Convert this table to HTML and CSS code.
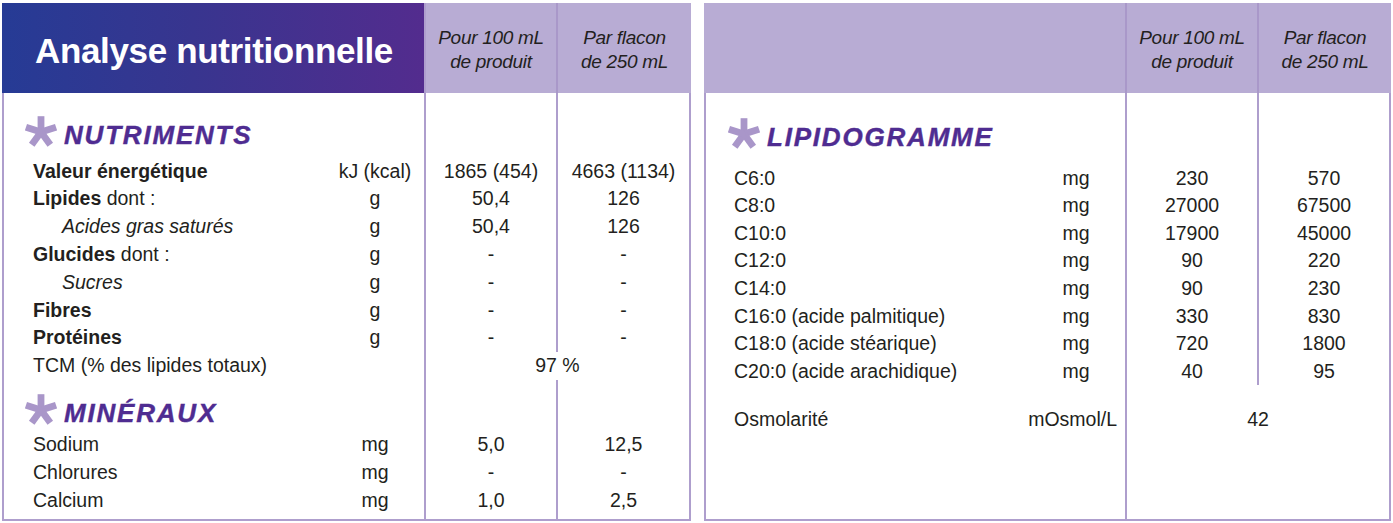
FILE: index.html
```html
<!DOCTYPE html>
<html lang="fr">
<head>
<meta charset="utf-8">
<title>Analyse nutritionnelle</title>
<link rel="stylesheet" href="styles.css">
</head>
<body>
<div class="page">
  <section class="panel left">
    <div class="head">
      <div class="title">Analyse nutritionnelle</div>
      <div class="hc">Pour 100 mL<br>de produit</div>
      <div class="hc">Par flacon<br>de 250 mL</div>
    </div>
    <div class="body">
      <div class="row sec s1">
        <div class="lc"><h2><svg class="star" viewBox="-16 -16 32 32" width="32" height="32" aria-hidden="true"><g stroke="#a996c9" stroke-width="6.8"><line x1="0" y1="0" x2="0" y2="-15.8"/><line x1="0" y1="0" x2="0" y2="-15.8" transform="rotate(72)"/><line x1="0" y1="0" x2="0" y2="-15.8" transform="rotate(144)"/><line x1="0" y1="0" x2="0" y2="-15.8" transform="rotate(216)"/><line x1="0" y1="0" x2="0" y2="-15.8" transform="rotate(288)"/></g></svg><span>NUTRIMENTS</span></h2></div>
        <div class="vc"></div><div class="vc"></div>
      </div>
      <div class="row"><div class="lc"><span class="lbl"><b>Valeur énergétique</b></span><span class="unit">kJ (kcal)</span></div><div class="vc">1865 (454)</div><div class="vc">4663 (1134)</div></div>
      <div class="row"><div class="lc"><span class="lbl"><b>Lipides</b> dont :</span><span class="unit">g</span></div><div class="vc">50,4</div><div class="vc">126</div></div>
      <div class="row"><div class="lc"><span class="lbl sub">Acides gras saturés</span><span class="unit">g</span></div><div class="vc">50,4</div><div class="vc">126</div></div>
      <div class="row"><div class="lc"><span class="lbl"><b>Glucides</b> dont :</span><span class="unit">g</span></div><div class="vc">-</div><div class="vc">-</div></div>
      <div class="row"><div class="lc"><span class="lbl sub">Sucres</span><span class="unit">g</span></div><div class="vc">-</div><div class="vc">-</div></div>
      <div class="row"><div class="lc"><span class="lbl"><b>Fibres</b></span><span class="unit">g</span></div><div class="vc">-</div><div class="vc">-</div></div>
      <div class="row"><div class="lc"><span class="lbl"><b>Protéines</b></span><span class="unit">g</span></div><div class="vc">-</div><div class="vc">-</div></div>
      <div class="row"><div class="lc"><span class="lbl">TCM (% des lipides totaux)</span></div><div class="vc span2">97 %</div></div>
      <div class="row sec s2">
        <div class="lc"><h2><svg class="star" viewBox="-16 -16 32 32" width="32" height="32" aria-hidden="true"><g stroke="#a996c9" stroke-width="6.8"><line x1="0" y1="0" x2="0" y2="-15.8"/><line x1="0" y1="0" x2="0" y2="-15.8" transform="rotate(72)"/><line x1="0" y1="0" x2="0" y2="-15.8" transform="rotate(144)"/><line x1="0" y1="0" x2="0" y2="-15.8" transform="rotate(216)"/><line x1="0" y1="0" x2="0" y2="-15.8" transform="rotate(288)"/></g></svg><span>MINÉRAUX</span></h2></div>
        <div class="vc"></div><div class="vc"></div>
      </div>
      <div class="row r28"><div class="lc"><span class="lbl">Sodium</span><span class="unit">mg</span></div><div class="vc">5,0</div><div class="vc">12,5</div></div>
      <div class="row r28"><div class="lc"><span class="lbl">Chlorures</span><span class="unit">mg</span></div><div class="vc">-</div><div class="vc">-</div></div>
      <div class="row r28"><div class="lc"><span class="lbl">Calcium</span><span class="unit">mg</span></div><div class="vc">1,0</div><div class="vc">2,5</div></div>
      <div class="row fill"><div class="lc"></div><div class="vc"></div><div class="vc"></div></div>
    </div>
  </section>

  <section class="panel right">
    <div class="head">
      <div class="blank"></div>
      <div class="hc">Pour 100 mL<br>de produit</div>
      <div class="hc">Par flacon<br>de 250 mL</div>
    </div>
    <div class="body">
      <div class="row sec s3">
        <div class="lc"><h2><svg class="star" viewBox="-16 -16 32 32" width="32" height="32" aria-hidden="true"><g stroke="#a996c9" stroke-width="6.8"><line x1="0" y1="0" x2="0" y2="-15.8"/><line x1="0" y1="0" x2="0" y2="-15.8" transform="rotate(72)"/><line x1="0" y1="0" x2="0" y2="-15.8" transform="rotate(144)"/><line x1="0" y1="0" x2="0" y2="-15.8" transform="rotate(216)"/><line x1="0" y1="0" x2="0" y2="-15.8" transform="rotate(288)"/></g></svg><span>LIPIDOGRAMME</span></h2></div>
        <div class="vc"></div><div class="vc"></div>
      </div>
      <div class="row"><div class="lc"><span class="lbl">C6:0</span><span class="unit">mg</span></div><div class="vc">230</div><div class="vc">570</div></div>
      <div class="row"><div class="lc"><span class="lbl">C8:0</span><span class="unit">mg</span></div><div class="vc">27000</div><div class="vc">67500</div></div>
      <div class="row"><div class="lc"><span class="lbl">C10:0</span><span class="unit">mg</span></div><div class="vc">17900</div><div class="vc">45000</div></div>
      <div class="row"><div class="lc"><span class="lbl">C12:0</span><span class="unit">mg</span></div><div class="vc">90</div><div class="vc">220</div></div>
      <div class="row"><div class="lc"><span class="lbl">C14:0</span><span class="unit">mg</span></div><div class="vc">90</div><div class="vc">230</div></div>
      <div class="row"><div class="lc"><span class="lbl">C16:0 (acide palmitique)</span><span class="unit">mg</span></div><div class="vc">330</div><div class="vc">830</div></div>
      <div class="row"><div class="lc"><span class="lbl">C18:0 (acide stéarique)</span><span class="unit">mg</span></div><div class="vc">720</div><div class="vc">1800</div></div>
      <div class="row"><div class="lc"><span class="lbl">C20:0 (acide arachidique)</span><span class="unit">mg</span></div><div class="vc">40</div><div class="vc">95</div></div>
      <div class="row osmo"><div class="lc"><span class="lbl">Osmolarité</span><span class="unit wide">mOsmol/L</span></div><div class="vc span2">42</div></div>
      <div class="row fill"><div class="lc"></div><div class="vc span2"></div></div>
    </div>
  </section>
</div>
</body>
</html>
```

FILE: styles.css
```css
* { box-sizing: border-box; }

:root {
  --line: #ae9ecd;
  --lilac: #b8acd4;
  --ink: #231f20;
  --purple: #4f2c91;
}

body {
  margin: 0;
  background: #ffffff;
  font-family: "Liberation Sans", Arial, Helvetica, sans-serif;
  color: var(--ink);
}

.page {
  display: flex;
  gap: 13px;
  padding: 3px 0 0 2px;
}

.panel {
  display: flex;
  flex-direction: column;
  height: 518px;
}

.left {
  width: 689px;
  --head-cols: 422px 132px 135px;
  --cols: 420px 132px 133px;
  --pad: 29px;
  --lh: 27.8px;
}

.right {
  width: 687px;
  --head-cols: 421px 132px 134px;
  --cols: 419px 132px 132px;
  --pad: 28px;
  --lh: 27.6px;
}

/* header */
.head {
  display: grid;
  grid-template-columns: var(--head-cols);
  height: 90px;
  background: var(--lilac);
  flex: none;
}

.title {
  display: flex;
  align-items: center;
  padding: 5px 0 0 33px;
  background: linear-gradient(90deg, #263b95 0%, #38358f 45%, #532c8e 100%);
  color: #ffffff;
  font-weight: bold;
  font-size: 35px;
  letter-spacing: -0.35px;
  white-space: nowrap;
}

.hc {
  border-left: 2px solid #a998c9;
  display: flex;
  align-items: center;
  justify-content: center;
  padding-top: 3px;
  text-align: center;
  font-style: italic;
  font-size: 19px;
  line-height: 24px;
  letter-spacing: -0.3px;
  color: var(--ink);
}

.left .head .hc:nth-child(2) { border-left-color: var(--line); }

/* body */
.body {
  flex: 1;
  display: flex;
  flex-direction: column;
  border: 2px solid var(--line);
  border-top: 0;
}

.row {
  display: grid;
  grid-template-columns: var(--cols);
  font-size: 19.5px;
  line-height: var(--lh);
  white-space: nowrap;
}

.row.r28 { line-height: 28px; }

.lc {
  display: flex;
  padding-left: var(--pad);
  padding-right: 11px;
}

.lbl { flex: 1; }
.lbl b { font-weight: bold; }
.sub { padding-left: 29px; font-style: italic; }

.unit {
  width: 76px;
  text-align: center;
}

.unit.wide {
  width: auto;
  margin-right: -3px;
}

.vc {
  border-left: 2px solid var(--line);
  text-align: center;
}

.span2 { grid-column: 2 / 4; }

.fill { flex: 1; }

/* section headings */
.sec .lc {
  padding-left: 21px;
}

.s1 .lc { padding-top: 27.4px; padding-bottom: 7.2px; }
.s2 .lc { padding-top: 18.4px; padding-bottom: 1.2px; }
.s3 .lc { padding-top: 29.4px; padding-bottom: 12.2px; padding-left: 22px; }

.sec h2 {
  display: flex;
  align-items: center;
  gap: 7px;
  margin: 0;
  height: 30px;
  font-size: 26px;
  line-height: 30px;
  font-style: italic;
  font-weight: bold;
  letter-spacing: 1.8px;
  color: var(--purple);
  -webkit-text-stroke: 0.4px var(--purple);
}

.star {
  flex: none;
  margin-top: -7px;
}

.osmo .lc,
.osmo .vc {
  padding-top: 20.2px;
}
```
